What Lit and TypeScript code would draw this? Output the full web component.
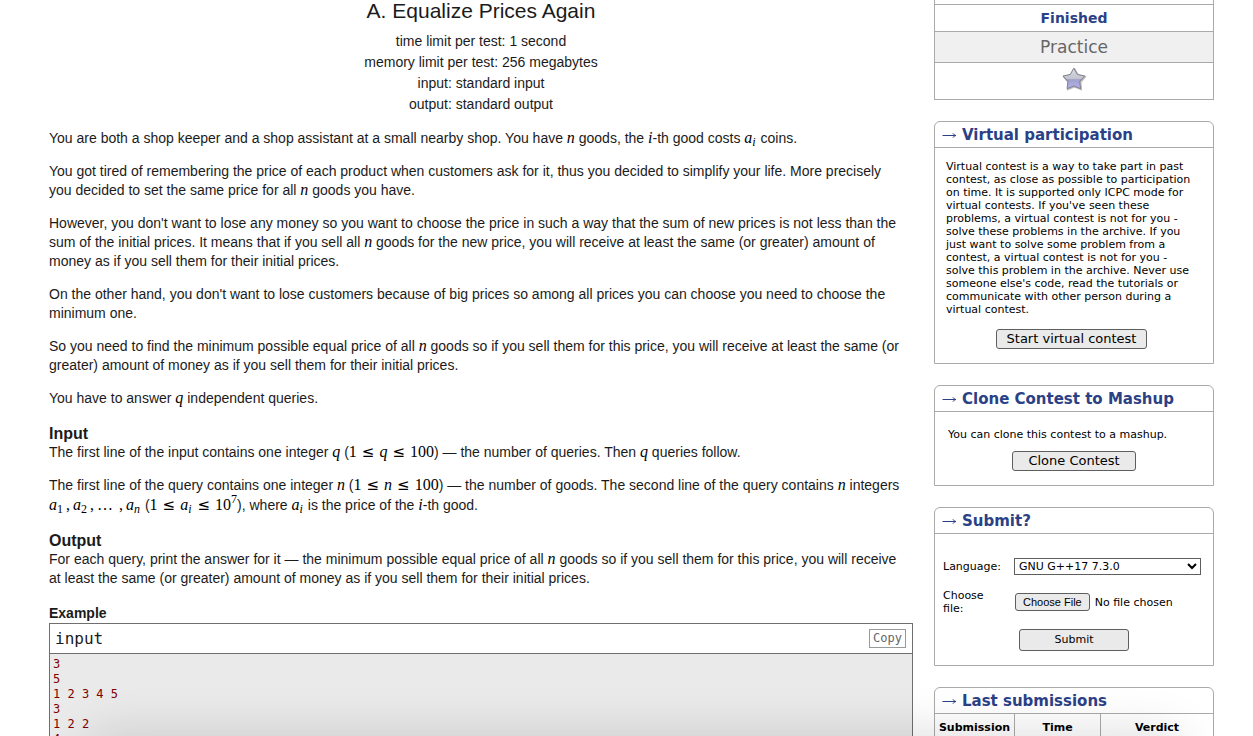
import { LitElement, html, css } from "lit";
import { customElement, property } from "lit/decorators.js";

const LE = html`<span class="rel">≤</span>`;
const v = (name: string) => html`<i>${name}</i>`;
const ai = html`<span class="math"><i>a<sub>i</sub></i></span>`;
const n = html`<span class="math">${v("n")}</span>`;
const q = html`<span class="math">${v("q")}</span>`;
const i = html`<span class="math">${v("i")}</span>`;

@customElement("side-box")
class SideBox extends LitElement {
  @property() caption = "";

  static styles = css`
    :host {
      display: block;
      border: 1px solid #aaa;
      border-radius: 6px 6px 0 0;
      background: #fff;
    }
    .caption {
      display: flex;
      align-items: center;
      gap: 5px;
      margin: 0;
      padding: 2px 7px 0;
      height: 23px;
      border-bottom: 1px solid #aaa;
      font: bold 15px/23px "DejaVu Sans", sans-serif;
      color: #2b4186;
    }
    .arrow {
      flex: none;
    }
  `;

  render() {
    return html`
      <h2 class="caption">
        <svg class="arrow" width="15" height="9" viewBox="0 0 15 9" fill="none" stroke="currentColor" aria-hidden="true">
          <path d="M.5 4.500H13.500" />
          <path d="M11 2.300c.5 1.200 1.400 1.900 3 2.200-1.600.3-2.500 1-3 2.200" />
        </svg>
        ${this.caption}
      </h2>
      <slot></slot>
    `;
  }
}

@customElement("app-root")
class AppRoot extends LitElement {
  static styles = css`
    :host {
      display: block;
      height: 100vh;
      overflow: hidden;
      background: #fff;
      color: #1b1b1b;
    }
    .page {
      display: grid;
      grid-template-columns: minmax(0, 1fr) 280px;
      gap: 21px;
      align-items: start;
      padding: 0 39px 0 49px;
    }
    .statement {
      font: 14px/19px "Liberation Sans", sans-serif;
    }
    .head {
      text-align: center;
      line-height: 21px;
      margin-bottom: 14px;
    }
    .title {
      margin: 0;
      padding-bottom: 9px;
      font-size: 21px;
      font-weight: normal;
      line-height: 22px;
    }
    .statement p {
      margin: 0 0 14px;
      padding-right: 8px;
    }
    .section {
      margin: 16px 0 0;
      font-size: 16px;
      line-height: 19px;
    }
    .example {
      margin: 16px 0 0;
      font-size: 14px;
      line-height: 19px;
    }
    .math {
      font-family: "Liberation Serif", serif;
      font-size: 16px;
      line-height: 16px;
      white-space: nowrap;
      color: #000;
    }
    .math sub,
    .math sup {
      font-size: 12px;
    }
    .math sub {
      line-height: 8px;
      vertical-align: -3px;
      padding-right: 1px;
    }
    .math sup {
      line-height: 9px;
      vertical-align: 7px;
    }
    .rel {
      margin: 0 5px;
      font-family: "DejaVu Sans", sans-serif;
      font-size: 15px;
      line-height: 15px;
    }
    .comma {
      margin: 0 3px 0 2px;
    }
    .sample {
      border: 1px solid #6f6f6f;
    }
    .sample-head {
      display: flex;
      align-items: center;
      justify-content: space-between;
      height: 29px;
      padding: 0 6px 0 5px;
      border-bottom: 1px solid #6f6f6f;
      font: 16px/29px "DejaVu Sans Mono", monospace;
    }
    .copy {
      height: 19px;
      padding: 0 3px;
      border: 1px solid #999;
      background: #fff;
      font: 12px/15px "DejaVu Sans Mono", monospace;
      color: #666;
    }
    .data {
      margin: 0;
      padding: 3px;
      background: #eaeaea;
      font: 12px/15px "DejaVu Sans Mono", monospace;
      color: #800000;
    }
    .sidebar {
      display: flex;
      flex-direction: column;
      gap: 21px;
      font: 11px/13px "DejaVu Sans", sans-serif;
      color: #000;
    }
    .contest {
      width: 100%;
      border-collapse: collapse;
      text-align: center;
    }
    .contest td {
      border: 1px solid #aaa;
      padding: 0;
    }
    .top td {
      height: 4px;
      border-top: 0;
    }
    .finished td {
      height: 26px;
      font-size: 14px;
      font-weight: bold;
      color: #2b4186;
    }
    .practice td {
      height: 30px;
      background: #f0f0f0;
      font-size: 17px;
      color: #666;
    }
    .fav td {
      height: 36px;
    }
    .star {
      display: block;
      margin: -4px auto 0;
    }
    .virtual {
      padding: 12px 16px 14px 11px;
    }
    .virtual p {
      margin: 0 0 13px;
    }
    .clone {
      padding: 16px 13px 14px;
    }
    .clone p {
      margin: 0 0 10px;
    }
    .center {
      display: flex;
      justify-content: center;
    }
    .btn {
      border: 1px solid #5e5e5e;
      border-radius: 3px;
      background: #eaeaea;
      color: #000;
      height: 20px;
      padding: 0 10px;
      font: 13px/18px "DejaVu Sans", sans-serif;
    }
    .btn-wide {
      padding: 0 15px;
    }
    .form {
      display: grid;
      grid-template-columns: 62px minmax(0, 1fr);
      column-gap: 9px;
      row-gap: 14px;
      align-items: center;
      padding: 24px 12px 14px 8px;
    }
    .select {
      width: 100%;
      height: 17px;
      padding: 0;
      border: 1px solid #5e5e5e;
      border-radius: 0;
      background: #fff;
      font: 11px/13px "DejaVu Sans", sans-serif;
      color: #000;
    }
    .file {
      width: 100%;
      height: 18px;
      font: 11px/18px "DejaVu Sans", sans-serif;
    }
    .file::file-selector-button {
      height: 18px;
      margin: 0 5px 0 1px;
      padding: 0 7px;
      border: 1px solid #5e5e5e;
      border-radius: 3px;
      background: #eaeaea;
      font: 11px/16px "Liberation Sans", sans-serif;
      color: #000;
    }
    .submit {
      grid-column: 2;
      justify-self: start;
      width: 110px;
      height: 22px;
      margin-left: 5px;
      font-size: 11px;
    }
    .last {
      width: 100%;
      border-collapse: collapse;
      table-layout: fixed;
    }
    .last th {
      height: 26px;
      padding: 0;
      border-right: 1px solid #aaa;
    }
    .last th:last-child {
      border-right: 0;
    }
    .c1 {
      width: 79px;
    }
    .c2 {
      width: 85px;
    }
    .shade {
      position: fixed;
      left: 90px;
      right: 75px;
      bottom: -40px;
      height: 40px;
      box-shadow: 0 0 50px rgba(0, 0, 0, 0.16);
      pointer-events: none;
    }
  `;

  render() {
    return html`
      <div class="page">
        <main class="statement">
          <div class="head">
            <h1 class="title">A. Equalize Prices Again</h1>
            <div>time limit per test: 1 second</div>
            <div>memory limit per test: 256 megabytes</div>
            <div>input: standard input</div>
            <div>output: standard output</div>
          </div>
          <p>You are both a shop keeper and a shop assistant at a small nearby shop. You have ${n} goods, the ${i}-th good costs ${ai} coins.</p>
          <p>You got tired of remembering the price of each product when customers ask for it, thus you decided to simplify your life. More precisely you decided to set the same price for all ${n} goods you have.</p>
          <p>However, you don't want to lose any money so you want to choose the price in such a way that the sum of new prices is not less than the sum of the initial prices. It means that if you sell all ${n} goods for the new price, you will receive at least the same (or greater) amount of money as if you sell them for their initial prices.</p>
          <p>On the other hand, you don't want to lose customers because of big prices so among all prices you can choose you need to choose the minimum one.</p>
          <p>So you need to find the minimum possible equal price of all ${n} goods so if you sell them for this price, you will receive at least the same (or greater) amount of money as if you sell them for their initial prices.</p>
          <p>You have to answer ${q} independent queries.</p>

          <h3 class="section">Input</h3>
          <p>The first line of the input contains one integer ${q} (<span class="math">1${LE}${v("q")}${LE}100</span>) — the number of queries. Then ${q} queries follow.</p>
          <p>The first line of the query contains one integer ${n} (<span class="math">1${LE}${v("n")}${LE}100</span>) — the number of goods. The second line of the query contains ${n} integers <span class="math"><i>a</i><sub>1</sub><span class="comma">,</span><i>a</i><sub>2</sub><span class="comma">,</span>…<span class="comma"> ,</span><i>a<sub>n</sub></i></span> (<span class="math">1${LE}<i>a<sub>i</sub></i>${LE}10<sup>7</sup></span>), where ${ai} is the price of the ${i}-th good.</p>

          <h3 class="section">Output</h3>
          <p>For each query, print the answer for it — the minimum possible equal price of all ${n} goods so if you sell them for this price, you will receive at least the same (or greater) amount of money as if you sell them for their initial prices.</p>

          <h3 class="example">Example</h3>
          <div class="sample">
            <div class="sample-head">
              <span>input</span>
              <button class="copy" type="button">Copy</button>
            </div>
            <pre class="data">${"3\n5\n1 2 3 4 5\n3\n1 2 2\n4\n"}</pre>
          </div>
        </main>

        <aside class="sidebar">
          <table class="contest">
            <tr class="top"><td></td></tr>
            <tr class="finished"><td>Finished</td></tr>
            <tr class="practice"><td>Practice</td></tr>
            <tr class="fav">
              <td>
                <svg class="star" width="26" height="26" viewBox="0 0 26 26" role="img" aria-label="Favourite">
                  <defs>
                    <linearGradient id="fill" x1="0" y1="0" x2="0" y2="1">
                      <stop offset="0" stop-color="#dcdce0" />
                      <stop offset=".5" stop-color="#c4c4d0" />
                      <stop offset=".56" stop-color="#a0a0cc" />
                      <stop offset="1" stop-color="#b4b4f0" />
                    </linearGradient>
                  </defs>
                  <path d="M13.500 2.800l3.700 6.300 7.300 1.500-4.900 5.600.8 7.400-6.900-2.700-6.900 2.700.8-7.400-4.900-5.600 7.300-1.500z" fill="#777" stroke="#777" stroke-width="1.500" stroke-linejoin="round" opacity=".5" />
                  <path d="M12.800 2.200l3.600 6.300 7.200 1.500-4.900 5.400.8 7.300-6.700-2.800-6.700 2.800.8-7.300L2 10l7.200-1.500z" fill="url(#fill)" stroke="#808090" stroke-width="1" stroke-linejoin="round" />
                </svg>
              </td>
            </tr>
          </table>

          <side-box caption="Virtual participation">
            <div class="virtual">
              <p>Virtual contest is a way to take part in past contest, as close as possible to participation on time. It is supported only ICPC mode for virtual contests. If you've seen these problems, a virtual contest is not for you - solve these problems in the archive. If you just want to solve some problem from a contest, a virtual contest is not for you - solve this problem in the archive. Never use someone else's code, read the tutorials or communicate with other person during a virtual contest.</p>
              <div class="center"><button class="btn" type="button">Start virtual contest</button></div>
            </div>
          </side-box>

          <side-box caption="Clone Contest to Mashup">
            <div class="clone">
              <p>You can clone this contest to a mashup.</p>
              <div class="center"><button class="btn btn-wide" type="button">Clone Contest</button></div>
            </div>
          </side-box>

          <side-box caption="Submit?">
            <form class="form" @submit=${(e: Event) => e.preventDefault()}>
              <label for="language">Language:</label>
              <select id="language" class="select"><option>GNU G++17 7.3.0</option></select>
              <label for="source">Choose file:</label>
              <input id="source" class="file" type="file" />
              <button class="btn submit" type="submit">Submit</button>
            </form>
          </side-box>

          <side-box caption="Last submissions">
            <table class="last">
              <tr><th class="c1">Submission</th><th class="c2">Time</th><th>Verdict</th></tr>
            </table>
          </side-box>
        </aside>
      </div>
      <div class="shade"></div>
    `;
  }
}
